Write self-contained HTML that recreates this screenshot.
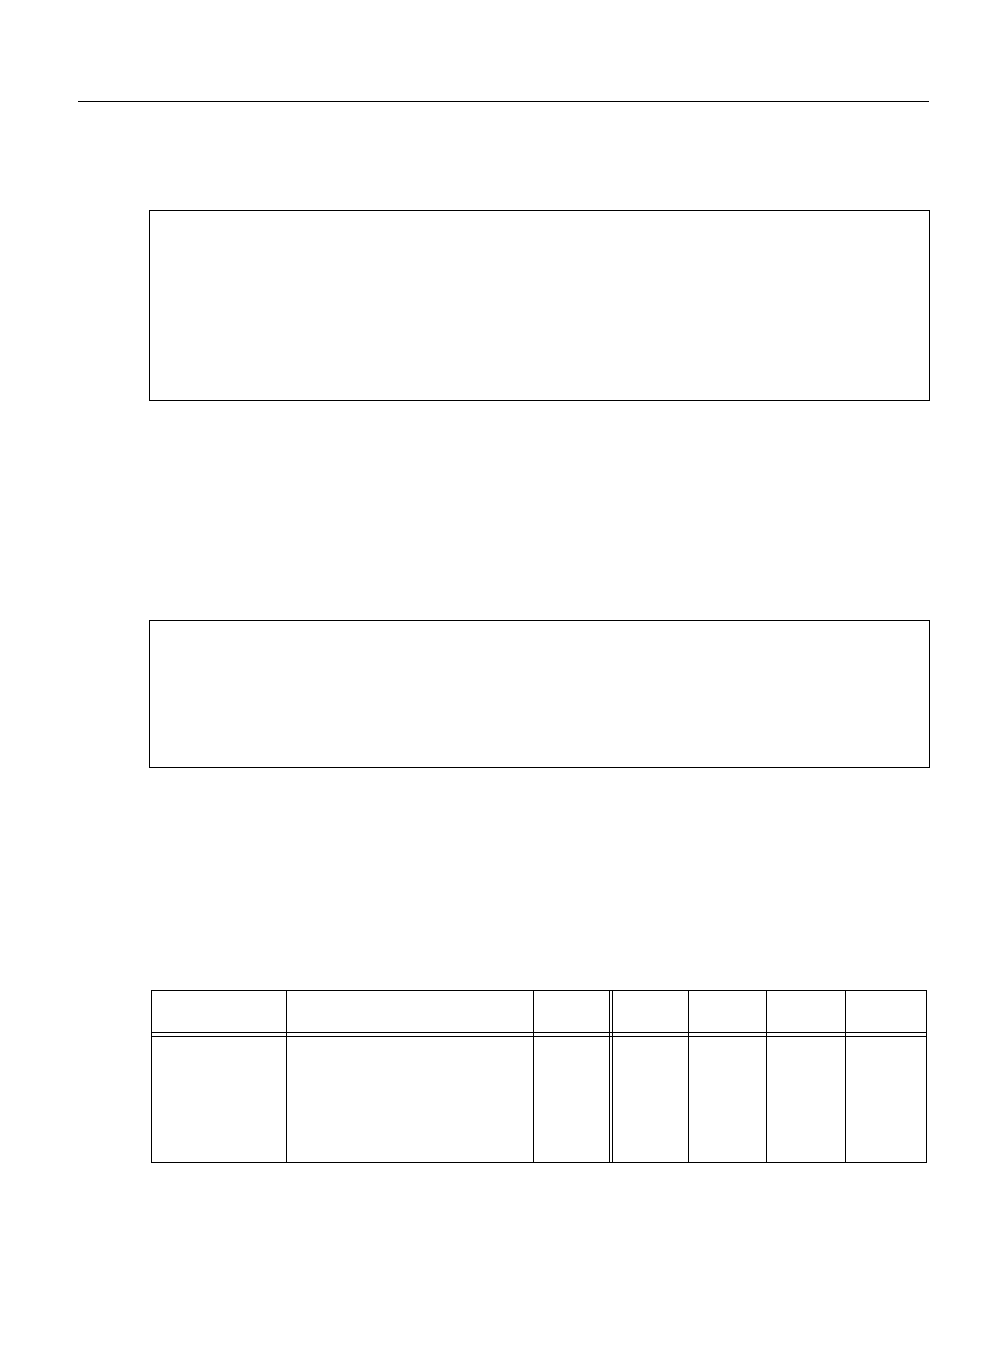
<!DOCTYPE html>
<html><head><style>
body{margin:0;width:1005px;height:1356px;background:#fff;position:relative;overflow:hidden}
.a{position:absolute;background:#000}
.b{position:absolute;border:1px solid #000;box-sizing:border-box}
</style></head><body>
<div class="a" style="left:78px;top:101px;width:851px;height:1px"></div>
<div class="b" style="left:149px;top:210px;width:781px;height:191px"></div>
<div class="b" style="left:149px;top:620px;width:781px;height:148px"></div>
<div class="b" style="left:151px;top:990px;width:776px;height:173px;border-width:1px"></div>
<div class="a" style="left:151px;top:1032px;width:776px;height:1px"></div>
<div class="a" style="left:151px;top:1036px;width:776px;height:1px"></div>
<div class="a" style="left:286px;top:990px;width:1px;height:172px"></div>
<div class="a" style="left:533px;top:990px;width:1px;height:172px"></div>
<div class="a" style="left:609px;top:990px;width:1px;height:172px"></div>
<div class="a" style="left:612px;top:990px;width:1px;height:172px"></div>
<div class="a" style="left:688px;top:990px;width:1px;height:172px"></div>
<div class="a" style="left:766px;top:990px;width:1px;height:172px"></div>
<div class="a" style="left:845px;top:990px;width:1px;height:172px"></div>
</body></html>
